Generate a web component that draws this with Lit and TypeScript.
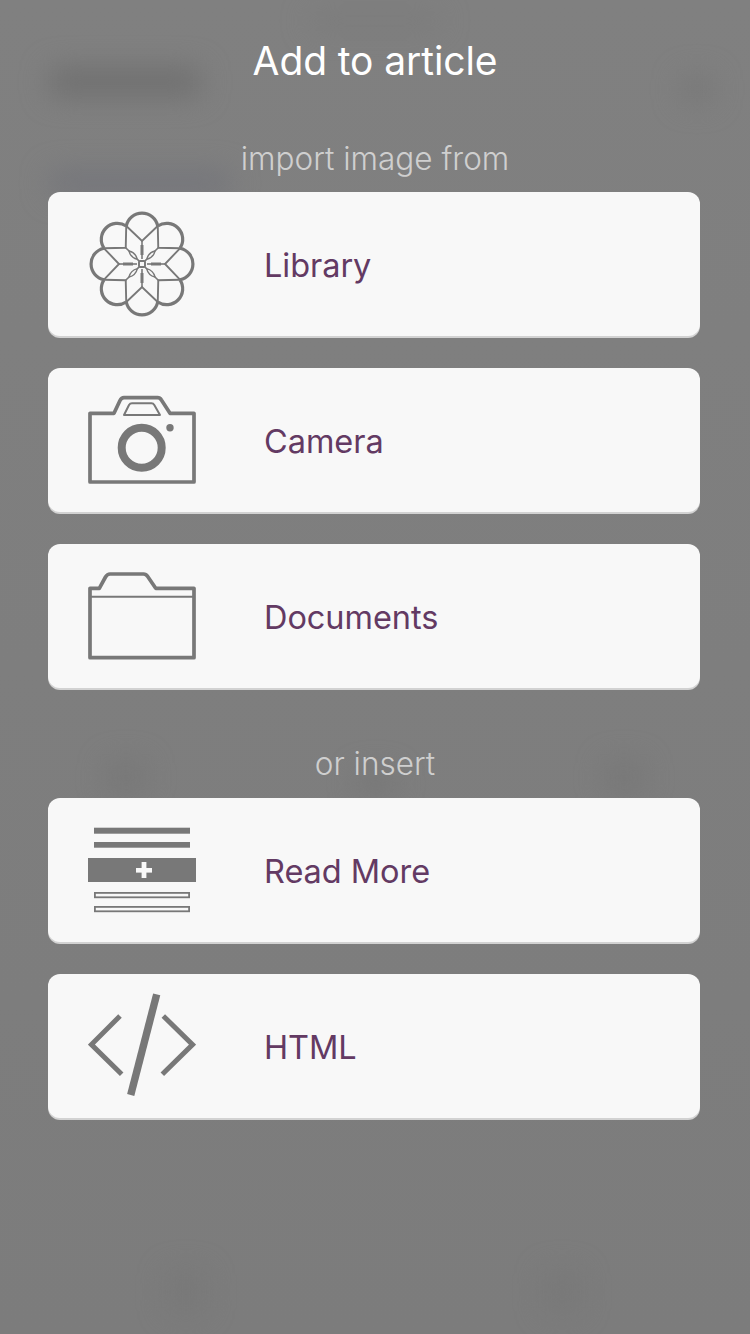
import { LitElement, html, svg, css } from 'lit';
import { customElement } from 'lit/decorators.js';

const ANGLES = [0, 45, 90, 135, 180, 225, 270, 315];

const flowerIcon = html`
  <svg class="icon" viewBox="0 0 108 112" fill="none" stroke="currentColor">
    <g transform="translate(54 56)">
      ${ANGLES.map(
        (a, i) => svg`
          <g transform="rotate(${a})">
            <path d="M-15.7 -38A16 16 0 0 1 15.7 -38" stroke-width="3.2" />
            <path d="M-15.7 -38L0 -23L15.7 -38" stroke-width="1.9" />
            ${i % 2 === 0
              ? svg`<path d="M0 -23V-5" stroke-width="1.6" /><path d="M0 -19V-9" stroke-width="3" />`
              : svg`<path d="M0 -23V-18M0 -7V-4" stroke-width="1.6" /><path d="M0 -18.5Q-3.6 -12.5 0 -6.5Q3.6 -12.5 0 -18.5Z" stroke-width="1.4" />`}
          </g>
        `,
      )}
      <rect x="-3" y="-3" width="6" height="6" rx="1" fill="#f8f8f8" stroke-width="1.9" />
    </g>
  </svg>
`;

const cameraIcon = html`
  <svg class="icon" viewBox="0 0 108 112" fill="none" stroke="currentColor" stroke-linejoin="round">
    <path
      d="M2 29.3H26L32 16.5Q33.4 13.7 36 13.7H69.5Q72 13.7 73.4 16L82 29.3H106V98H2Z"
      stroke-width="3.7"
    />
    <path d="M36 31L41 21Q42 19.3 44 19.3H63.5Q65.3 19.3 66.3 21L72 31Z" stroke-width="2" />
    <circle cx="53.7" cy="63.7" r="20" stroke-width="8" />
    <circle cx="82" cy="43.7" r="3.7" fill="currentColor" stroke="none" />
  </svg>
`;

const folderIcon = html`
  <svg class="icon" viewBox="0 0 108 112" fill="none" stroke="currentColor" stroke-linejoin="round">
    <path
      d="M2 28.3H11.3L17.5 17Q19.3 14 22 14H55.5Q58 14 59.7 16.5L67.7 28.3H106V97.7H2Z"
      stroke-width="3.7"
    />
    <path d="M2 36.7H106" stroke-width="2" />
  </svg>
`;

const readMoreIcon = html`
  <svg class="icon" viewBox="0 0 108 112" fill="none">
    <rect class="solid" x="6" y="13.7" width="96" height="6" />
    <rect class="solid" x="6" y="28" width="96" height="5.7" />
    <rect class="solid" x="0" y="44" width="108" height="24" />
    <rect class="knock" x="48" y="54" width="16" height="4.6" />
    <rect class="knock" x="53.6" y="48" width="4.8" height="16" />
    <rect class="outline" x="6.9" y="78.9" width="94.2" height="4.4" />
    <rect class="outline" x="6.9" y="92.9" width="94.2" height="4.4" />
  </svg>
`;

const htmlIcon = html`
  <svg class="icon" viewBox="0 0 108 112" fill="none" stroke="currentColor">
    <path d="M32 26L3.4 54.6L33.7 84.3" stroke-width="5" />
    <path d="M75.3 26L104.6 54.6L74.3 84.3" stroke-width="5" />
    <path d="M68.7 4.3L42.7 105" stroke-width="7.4" />
  </svg>
`;

const IMPORT_ROWS = [
  { label: 'Library', icon: flowerIcon },
  { label: 'Camera', icon: cameraIcon },
  { label: 'Documents', icon: folderIcon },
];

const INSERT_ROWS = [
  { label: 'Read More', icon: readMoreIcon },
  { label: 'HTML', icon: htmlIcon },
];

@customElement('app-root')
export class AppRoot extends LitElement {
  static styles = css`
    :host {
      display: block;
      width: 750px;
      height: 1334px;
      position: relative;
      overflow: hidden;
      background: linear-gradient(#808080, #7c7c7c);
      font-family: Inter, 'Liberation Sans', sans-serif;
    }

    /* the page underneath, blurred out */
    .backdrop {
      position: absolute;
      inset: 0;
      filter: blur(14px);
    }
    .blob {
      position: absolute;
      border-radius: 6px;
      background: #6f6f6f;
    }
    .blob.nav { left: 50px; top: 68px; width: 150px; height: 28px; }
    .blob.more { left: 682px; top: 76px; width: 30px; height: 26px; background: #777; }
    .blob.status { left: 310px; top: 14px; width: 130px; height: 14px; background: #7a7a7a; }
    .blob.sub { left: 50px; top: 172px; width: 180px; height: 22px; background: #73747a; }
    .blob.t1 { left: 108px; top: 762px; width: 36px; height: 32px; background: #777; }
    .blob.t2 { left: 358px; top: 772px; width: 36px; height: 24px; background: #777; }
    .blob.t3 { left: 606px; top: 762px; width: 36px; height: 32px; background: #777; }
    .blob.b1 { left: 168px; top: 1272px; width: 36px; height: 40px; background: #787878; }
    .blob.b2 { left: 545px; top: 1272px; width: 34px; height: 40px; background: #787878; }

    .sheet {
      position: relative;
      display: flex;
      flex-direction: column;
      padding: 0 50px 0 48px;
    }

    h1 {
      margin: 0;
      padding-top: 39px;
      height: 44px;
      line-height: 44px;
      font-size: 39px;
      font-weight: 400;
      letter-spacing: -0.1px;
      text-align: center;
      color: #fff;
      transform: translateX(1px);
    }

    .section {
      height: 40px;
      line-height: 40px;
      font-size: 31.5px;
      font-weight: 300;
      text-align: center;
      color: #cfcfcf;
      transform: translateX(1px);
    }
    .section.first { margin-top: 56px; margin-bottom: 13px; }
    .section.second { margin-top: 56px; margin-bottom: 14px; }

    .rows {
      display: flex;
      flex-direction: column;
      gap: 32px;
    }

    .row {
      display: flex;
      align-items: center;
      height: 144px;
      padding-left: 40px;
      border-radius: 12px;
      background: #f8f8f8;
      box-shadow: 0 2px 0 #d2d2d2;
    }

    .icon {
      display: block;
      flex: none;
      width: 108px;
      height: 112px;
      color: #787878;
    }
    .solid { fill: #787878; }
    .knock { fill: #f8f8f8; }
    .outline { stroke: #787878; stroke-width: 1.8; }

    .label {
      margin-left: 68px;
      padding-top: 2px;
      font-size: 32.5px;
      letter-spacing: -0.05px;
      color: #633a63;
    }
  `;

  private renderRows(rows: { label: string; icon: unknown }[]) {
    return html`
      <div class="rows">
        ${rows.map(
          (r) => html`
            <div class="row">
              ${r.icon}
              <span class="label">${r.label}</span>
            </div>
          `,
        )}
      </div>
    `;
  }

  render() {
    return html`
      <div class="backdrop">
        <div class="blob nav"></div>
        <div class="blob more"></div>
        <div class="blob status"></div>
        <div class="blob sub"></div>
        <div class="blob t1"></div>
        <div class="blob t2"></div>
        <div class="blob t3"></div>
        <div class="blob b1"></div>
        <div class="blob b2"></div>
      </div>
      <div class="sheet">
        <h1>Add to article</h1>
        <div class="section first">import image from</div>
        ${this.renderRows(IMPORT_ROWS)}
        <div class="section second">or insert</div>
        ${this.renderRows(INSERT_ROWS)}
      </div>
    `;
  }
}
